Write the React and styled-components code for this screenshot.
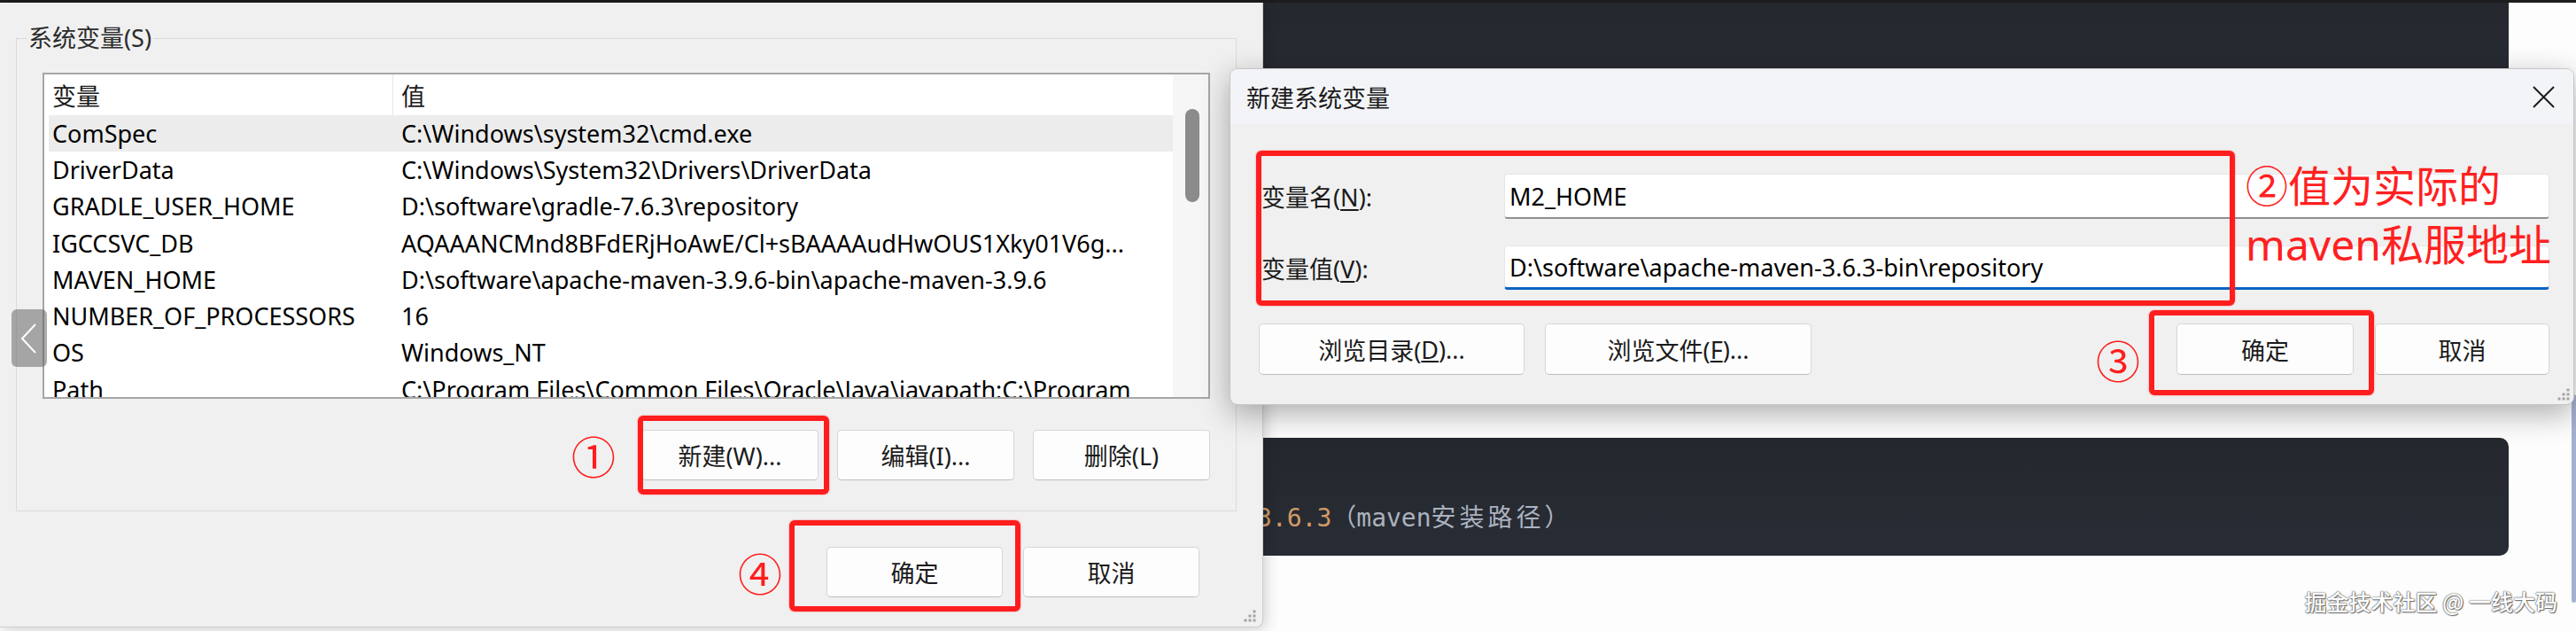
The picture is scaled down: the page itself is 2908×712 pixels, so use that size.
import React from "react";
//Styling
import styled, { createGlobalStyle } from "styled-components";

const GlobalStyle = createGlobalStyle`
  html, body {
    margin: 0;
    padding: 0;
    background: #fdfdfd;
  }
  body {
    font-family: "Noto Sans", "Noto Sans CJK SC", sans-serif;
    color: #1a1a1a;
  }
`;

//Data
const variables = [
  ["ComSpec", "C:\\Windows\\system32\\cmd.exe"],
  ["DriverData", "C:\\Windows\\System32\\Drivers\\DriverData"],
  ["GRADLE_USER_HOME", "D:\\software\\gradle-7.6.3\\repository"],
  ["IGCCSVC_DB", "AQAAANCMnd8BFdERjHoAwE/Cl+sBAAAAudHwOUS1Xky01V6g..."],
  ["MAVEN_HOME", "D:\\software\\apache-maven-3.9.6-bin\\apache-maven-3.9.6"],
  ["NUMBER_OF_PROCESSORS", "16"],
  ["OS", "Windows_NT"],
  ["Path", "C:\\Program Files\\Common Files\\Oracle\\Java\\javapath;C:\\Program"],
];

const Grip = () => (
  <svg width="16" height="16" viewBox="0 0 16 16">
    {[
      [13, 3],
      [13, 8],
      [8, 8],
      [13, 13],
      [8, 13],
      [3, 13],
    ].map(([x, y]) => (
      <rect key={`${x}-${y}`} x={x - 1.5} y={y - 1.5} width="3" height="3" fill="#a3a3a3" />
    ))}
  </svg>
);

const App = () => {
  return (
    <Screen>
      <GlobalStyle />
      <TopStrip />

      {/* Browser page behind the windows */}
      <Page>
        <CodeBlock $h={100} $top />
        <CodeBlock $h={133} $mt={391}>
          <CodeLine>
            <Num>3.6.3</Num>（maven<Cjk>安装路径</Cjk>）
          </CodeLine>
        </CodeBlock>
      </Page>
      <PageScroll />
      <Watermark>掘金技术社区 @ 一线大码</Watermark>

      {/* Environment variables window */}
      <LeftDialog>
        <GroupBox>
          <Legend>系统变量(S)</Legend>
          <GroupBody>
            <ListBox>
              <Table>
                <HeaderRow>
                  <HeadCell $first>变量</HeadCell>
                  <HeadCell>值</HeadCell>
                </HeaderRow>
                {variables.map(([name, value], i) => (
                  <Row key={name} $selected={i === 0}>
                    <Cell $first>{name}</Cell>
                    <Cell>{value}</Cell>
                  </Row>
                ))}
              </Table>
              <ScrollTrack>
                <ScrollThumb />
              </ScrollTrack>
            </ListBox>
            <ButtonRow $mt={35} $gap={21}>
              <Button $w={200}>新建(W)...</Button>
              <Button $w={200}>编辑(I)...</Button>
              <Button $w={200}>删除(L)</Button>
            </ButtonRow>
          </GroupBody>
        </GroupBox>
        <ButtonRow $mt={40} $gap={23} $mr={42}>
          <Button $w={199}>确定</Button>
          <Button $w={199}>取消</Button>
        </ButtonRow>
        <GripSpot>
          <Grip />
        </GripSpot>
      </LeftDialog>

      <NavArrow>
        <svg width="20" height="34" viewBox="0 0 20 34">
          <polyline points="17,1 2,17 17,33" fill="none" stroke="#fff" strokeWidth="2" />
        </svg>
      </NavArrow>

      {/* New system variable dialog */}
      <NewDialog>
        <TitleBar>
          <Title>新建系统变量</Title>
          <svg width="25" height="25" viewBox="0 0 25 25">
            <line x1="1" y1="1" x2="24" y2="24" stroke="#1a1a1a" strokeWidth="2" />
            <line x1="24" y1="1" x2="1" y2="24" stroke="#1a1a1a" strokeWidth="2" />
          </svg>
        </TitleBar>
        <Form>
          <Label>
            变量名(<u>N</u>):
          </Label>
          <Field>M2_HOME</Field>
          <Label>
            变量值(<u>V</u>):
          </Label>
          <Field $focus>D:\software\apache-maven-3.6.3-bin\repository</Field>
        </Form>
        <DialogButtons>
          <ButtonGroup $gap={23}>
            <Button $w={300}>
              浏览目录(<u>D</u>)...
            </Button>
            <Button $w={301}>
              浏览文件(<u>F</u>)...
            </Button>
          </ButtonGroup>
          <ButtonGroup $gap={24}>
            <Button $w={200}>确定</Button>
            <Button $w={197}>取消</Button>
          </ButtonGroup>
        </DialogButtons>
        <GripSpot $small>
          <Grip />
        </GripSpot>
      </NewDialog>

      {/* Red annotations */}
      <RedBox $x={720} $y={469} $w={216} $h={89} />
      <RedBox $x={891} $y={587} $w={261} $h={103} />
      <RedBox $x={1418} $y={170} $w={1105} $h={175} />
      <RedBox $x={2426} $y={350} $w={254} $h={96} />
      <Circled $x={670} $y={513}>①</Circled>
      <Circled $x={858} $y={645}>④</Circled>
      <Circled $x={2391} $y={405}>③</Circled>
      <Note>
        ②值为实际的
        <br />
        maven私服地址
      </Note>
    </Screen>
  );
};

const Screen = styled.div`
  position: relative;
  width: 2908px;
  height: 712px;
  overflow: hidden;
  background: #fdfdfd;
`;

const TopStrip = styled.div`
  height: 3px;
  background: #1c1c1e;
`;

const Page = styled.div`
  display: flex;
  flex-direction: column;
  padding: 0 76px 0 1380px;
`;

const CodeBlock = styled.div`
  box-sizing: border-box;
  height: ${(p) => p.$h}px;
  margin-top: ${(p) => p.$mt || 0}px;
  border-radius: ${(p) => (p.$top ? "0 0 10px 10px" : "10px")};
  background: linear-gradient(180deg, #25282e 0%, #282c34 100%);
  padding: 71px 0 0 39px;
`;

const CodeLine = styled.div`
  font-family: "DejaVu Sans Mono", "Noto Sans CJK SC", monospace;
  font-size: 28px;
  line-height: 40px;
  color: #abb2bf;
  white-space: nowrap;
`;

const Num = styled.span`
  color: #d19a66;
`;

const Cjk = styled.span`
  letter-spacing: 4px;
`;

const PageScroll = styled.div`
  position: absolute;
  left: 2903px;
  top: 445px;
  width: 5px;
  height: 235px;
  border-radius: 3px;
  background: #a4b1d2;
`;

const Watermark = styled.div`
  position: absolute;
  right: 21px;
  top: 660px;
  font-family: "Noto Sans CJK SC", sans-serif;
  font-size: 25px;
  font-weight: 500;
  line-height: 36px;
  color: #ffffff;
  text-shadow: 0 0 1px #444, 0 0 2px #666, 1px 1px 1px #777;
  white-space: nowrap;
`;

const LeftDialog = styled.div`
  position: absolute;
  left: 0;
  top: 3px;
  width: 1426px;
  height: 705px;
  box-sizing: border-box;
  display: flex;
  flex-direction: column;
  padding: 22px 29px 0 18px;
  background: #f0f0f0;
  border-right: 1px solid #cdcdcd;
  border-bottom: 1px solid #cdcdcd;
  border-bottom-right-radius: 8px;
  box-shadow: 3px 3px 16px rgba(0, 0, 0, 0.18);
`;

const GroupBox = styled.fieldset`
  margin: 0;
  padding: 0;
  border: 1px solid #dadada;
  min-width: 0;
`;

const Legend = styled.legend`
  margin-left: 11px;
  padding: 0 2px;
  font-size: 27px;
  line-height: 36px;
  color: #2b2b2b;
`;

const GroupBody = styled.div`
  padding: 21px 29px 34px 29px;
`;

const ListBox = styled.div`
  display: flex;
  height: 368px;
  box-sizing: border-box;
  border: 2px solid #a6a6a6;
  background: #ffffff;
  overflow: hidden;
`;

const Table = styled.div`
  flex: 1;
  padding-left: 5px;
  overflow: hidden;
`;

const HeaderRow = styled.div`
  display: grid;
  grid-template-columns: 389px 1fr;
  height: 46px;
  align-items: stretch;
`;

const HeadCell = styled.div`
  display: flex;
  align-items: center;
  padding-left: ${(p) => (p.$first ? 4 : 9)}px;
  border-right: ${(p) => (p.$first ? "1px solid #e6e6e6" : "none")};
  font-size: 27px;
  color: #1a1a1a;
`;

const Row = styled.div`
  display: grid;
  grid-template-columns: 389px 1fr;
  height: 41.3px;
  align-items: center;
  background: ${(p) => (p.$selected ? "#ececec" : "transparent")};
`;

const Cell = styled.div`
  padding-left: ${(p) => (p.$first ? 4 : 9)}px;
  font-size: 27px;
  line-height: 36px;
  color: #000;
  white-space: nowrap;
  overflow: hidden;
`;

const ScrollTrack = styled.div`
  width: 40px;
  background: #f6f6f6;
`;

const ScrollThumb = styled.div`
  width: 16px;
  height: 105px;
  margin: 39px 0 0 14px;
  border-radius: 8px;
  background: #8b8b8b;
`;

const ButtonRow = styled.div`
  display: flex;
  justify-content: flex-end;
  gap: ${(p) => p.$gap}px;
  margin-top: ${(p) => p.$mt}px;
  margin-right: ${(p) => p.$mr || 0}px;
`;

const Button = styled.div`
  box-sizing: border-box;
  width: ${(p) => p.$w}px;
  height: 57px;
  display: flex;
  align-items: center;
  justify-content: center;
  background: #fdfdfd;
  border: 1px solid #d6d6d6;
  border-bottom-color: #bdbdbd;
  border-radius: 5px;
  font-size: 27px;
  color: #1b1b1b;
  white-space: nowrap;
`;

const GripSpot = styled.div`
  position: absolute;
  right: ${(p) => (p.$small ? 3 : 6)}px;
  bottom: ${(p) => (p.$small ? 3 : 4)}px;
  line-height: 0;
`;

const NavArrow = styled.div`
  position: absolute;
  left: 13px;
  top: 349px;
  width: 40px;
  height: 65px;
  display: flex;
  align-items: center;
  justify-content: center;
  border-radius: 6px;
  background: rgba(90, 90, 90, 0.5);
`;

const NewDialog = styled.div`
  position: absolute;
  left: 1388px;
  top: 77px;
  width: 1518px;
  height: 380px;
  box-sizing: border-box;
  display: flex;
  flex-direction: column;
  background: #f0f0f0;
  border: 1px solid #c6c6c6;
  border-radius: 9px;
  box-shadow: 0 10px 34px rgba(0, 0, 0, 0.32);
  overflow: hidden;
`;

const TitleBar = styled.div`
  height: 62px;
  display: flex;
  align-items: center;
  justify-content: space-between;
  padding: 0 21px 0 18px;
  background: #f3f4f7;
`;

const Title = styled.div`
  font-size: 27px;
  color: #1a1a1a;
`;

const Form = styled.div`
  display: grid;
  grid-template-columns: 274px 1fr;
  grid-template-rows: 51px 50px;
  row-gap: 30px;
  align-items: center;
  padding: 56px 27px 0 35px;
`;

const Label = styled.div`
  font-size: 27px;
  color: #1a1a1a;
  white-space: nowrap;
  u {
    text-underline-offset: 3px;
  }
`;

const Field = styled.div`
  box-sizing: border-box;
  height: 100%;
  display: flex;
  align-items: center;
  padding-left: 5px;
  background: #ffffff;
  border: 1px solid #e6e6e6;
  border-bottom: ${(p) => (p.$focus ? "3px solid #0a64c2" : "2px solid #8f8f8f")};
  border-radius: 4px;
  font-size: 27px;
  color: #000;
  white-space: nowrap;
`;

const DialogButtons = styled.div`
  display: flex;
  justify-content: space-between;
  margin-top: 38px;
  padding: 0 27px 0 32px;
  ${Button} {
    height: 58px;
  }
`;

const ButtonGroup = styled.div`
  display: flex;
  gap: ${(p) => p.$gap}px;
`;

const RedBox = styled.div`
  position: absolute;
  left: ${(p) => p.$x}px;
  top: ${(p) => p.$y}px;
  width: ${(p) => p.$w}px;
  height: ${(p) => p.$h}px;
  box-sizing: border-box;
  border: 6px solid #ff1d1d;
  border-radius: 6px;
  box-shadow: 0 0 2px rgba(255, 40, 40, 0.6);
`;

const Circled = styled.div`
  position: absolute;
  left: ${(p) => p.$x - 25}px;
  top: ${(p) => p.$y - 25}px;
  width: 50px;
  height: 50px;
  display: flex;
  align-items: center;
  justify-content: center;
  font-family: "Noto Sans CJK SC", sans-serif;
  font-size: 50px;
  line-height: 50px;
  color: #ff1d1d;
`;

const Note = styled.div`
  position: absolute;
  left: 2535px;
  top: 177px;
  font-family: "Noto Sans", "Noto Sans CJK SC", sans-serif;
  font-size: 48px;
  line-height: 66px;
  color: #ff2020;
  white-space: nowrap;
`;

export default App;
